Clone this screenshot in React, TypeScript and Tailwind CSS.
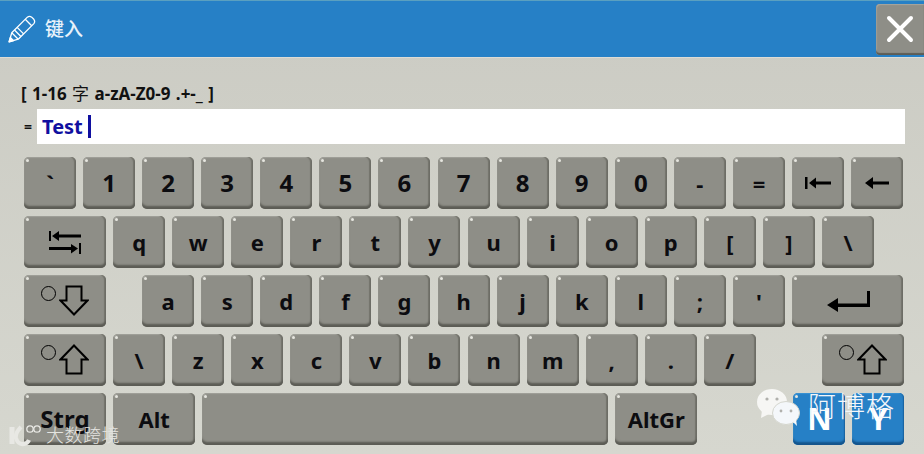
import React from "react";

const fontStack = "font-['Noto_Sans','Noto_Sans_CJK_SC',sans-serif]";

function Key({ w = "w-[52px]", blue = false, className = "", children }: { w?: string; blue?: boolean; className?: string; children?: React.ReactNode }) {
  return (
    <div
      className={`relative flex h-[52px] shrink-0 items-center justify-center rounded-[5px] font-bold leading-none ${
        blue
          ? "bg-[#2680c6] text-white shadow-[inset_0_-3px_2px_#14548c,inset_-1px_0_1px_#1c6aa8,inset_1px_1px_1px_#3f97d8]"
          : "bg-[#8e8e87] text-[#0c0c10] shadow-[inset_0_-3px_2px_#5c5c55,inset_-2px_0_1px_#74746d,inset_1px_1px_1px_#a6a69f]"
      } ${w} ${className || "text-[22px]"}`}
    >
      <span className="absolute left-[2px] top-[2px] h-[3px] w-[3px] rounded-full bg-[#e6e6e0]" />
      {children}
    </div>
  );
}

const Row = ({ children }: { children: React.ReactNode }) => <div className="flex gap-[7.08px]">{children}</div>;

const ShiftArrow = ({ down = false }: { down?: boolean }) => (
  <svg width="30" height="31" viewBox="0 0 30 31" className={down ? "rotate-180" : ""} fill="none" stroke="#000" strokeWidth="2">
    <path d="M15 1.5 L28.5 15.5 H22.5 V29.5 H7.5 V15.5 H1.5 Z" />
  </svg>
);

const ShiftKey = ({ down = false }: { down?: boolean }) => (
  <Key w="w-[82px]">
    <div className="flex items-start gap-[3px] pb-[2px]">
      <span className="mt-[1px] block h-[15px] w-[15px] shrink-0 rounded-full border border-black" />
      <ShiftArrow down={down} />
    </div>
  </Key>
);

const Chars = ({ chars, className = "" }: { chars: string[]; className?: string }) => (
  <>
    {chars.map((c, i) => (
      <Key key={i} className={className}>
        {c}
      </Key>
    ))}
  </>
);

export default function App() {
  return (
    <div className={`relative h-[454px] w-[924px] overflow-hidden bg-gradient-to-b from-[#cbcbc3] to-[#d6d7cf] ${fontStack}`}>
      <div className="flex h-[58px] items-center justify-between border-t border-b border-t-[#5aa0c0] border-b-[#dcdcd6] bg-[#2680c6] pl-[8px]">
        <div className="flex items-center">
          <svg width="28" height="28" viewBox="0 0 26 26" fill="none" stroke="#fff" strokeWidth="1.2" strokeLinejoin="round">
            <path d="M1 25 L3.5 16.5 L18 2 Q20 0.5 22 2 L24 4 Q25.5 6 24 8 L9.5 22.5 Z" />
            <path d="M3.5 16.5 L9.5 22.5 M6 14 L12 20 M8.5 11.5 L14.5 17.5 M16 4 L22 10" />
            <path d="M1 25 L2.2 20.8 L5.2 23.8 Z" fill="#fff" />
          </svg>
          <span className="ml-[9px] text-[19px] font-medium leading-none text-[#e8f2fa]">键入</span>
        </div>
        <div className="flex h-[51px] w-[48px] items-center justify-center rounded-l-[4px] bg-[#8e8e87] shadow-[inset_0_-2px_1px_#5c5c55,inset_1px_1px_1px_#a6a69f]">
          <svg width="28" height="28" viewBox="0 0 28 28" stroke="#fff" strokeWidth="4" strokeLinecap="round">
            <path d="M3 3 L25 25 M25 3 L3 25" />
          </svg>
        </div>
      </div>

      <div className="pl-[21px] pt-[27px] text-[17px] font-bold leading-[18px] text-[#111] [word-spacing:1px]">
        [ 1-16 <span className="font-normal">字</span> a-zA-Z0-9 .+-_ ]
      </div>

      <div className="mt-[6px] flex items-center pl-[24px]">
        <span className="w-[13px] text-[14px] font-bold text-[#111]">=</span>
        <div className="flex h-[35px] w-[868px] items-center bg-white pl-[5px] text-[20px] font-bold text-[#1010a0]">
          Test <span className="ml-[5px] h-[23px] w-[3px] bg-[#1010a0]" />
        </div>
      </div>

      <div className="flex flex-col gap-[7px] pl-[24px] pt-[13px]">
        <Row>
          <Chars chars={["`"]} />
          <Chars chars={["1", "2", "3", "4", "5", "6", "7", "8", "9", "0"]} className="text-[24px]" />
          <Chars chars={["-", "="]} />
          <Key>
            <svg width="26" height="14" viewBox="0 0 26 14" fill="#000">
              <rect x="0" y="1" width="2.5" height="12" />
              <path d="M4 7 L11 1.5 V5.5 H26 V8.5 H11 V12.5 Z" />
            </svg>
          </Key>
          <Key>
            <svg width="24" height="14" viewBox="0 0 24 14" fill="#000">
              <path d="M0 7 L8 1 V5.5 H24 V8.5 H8 V13 Z" />
            </svg>
          </Key>
        </Row>
        <Row>
          <Key w="w-[82px]">
            <svg width="34" height="26" viewBox="0 0 34 26" fill="#000">
              <rect x="1" y="2" width="2" height="10" />
              <path d="M4 7 L11 2 V5.5 H33 V8.5 H11 V12 Z" />
              <rect x="31" y="14" width="2" height="11" />
              <path d="M30 19.5 L23 15 V18 H1 V21 H23 V24.5 Z" />
            </svg>
          </Key>
          <Chars chars={["q", "w", "e", "r", "t", "y", "u", "i", "o", "p", "[", "]", "\\"]} />
        </Row>
        <Row>
          <ShiftKey down />
          <div className="w-[22px] shrink-0" />
          <Chars chars={["a", "s", "d", "f", "g", "h", "j", "k", "l", ";", "'"]} />
          <Key w="w-[111px]">
            <svg width="44" height="24" viewBox="0 0 44 24" fill="#000" className="ml-[3px]">
              <path d="M0 16 L11 9 V14.5 H40 V2 H43 V18 H11 V23 Z" />
            </svg>
          </Key>
        </Row>
        <Row>
          <ShiftKey />
          <Chars chars={["\\", "z", "x", "c", "v", "b", "n", "m", ",", ".", "/"]} />
          <div className="w-[52px] shrink-0" />
          <ShiftKey />
        </Row>
        <Row>
          <Key w="w-[82px]" className="text-[24px]">Strg</Key>
          <Key w="w-[82px]" className="text-[22px]">Alt</Key>
          <Key w="w-[406px]" />
          <Key w="w-[82px]" className="text-[22px]">AltGr</Key>
          <div className="w-[82px] shrink-0" />
          <Key blue className="text-[30px]">N</Key>
          <Key blue className="text-[30px]">Y</Key>
        </Row>
      </div>

      {/* Watermarks lying over the keys */}
      <div className="absolute left-[9px] top-[423px] flex items-center text-[#e4e4e0]">
        <svg width="34" height="24" viewBox="0 0 34 24" fill="none" stroke="#e8e8e4" strokeWidth="2">
          <path d="M3 4 V21" strokeWidth="5" />
          <path d="M12 4 Q6 10 7 15 Q9 22 15 21 Q19 20 20 17" strokeWidth="4" />
          <circle cx="21" cy="6" r="3.2" strokeWidth="1.3" />
          <circle cx="28" cy="6" r="3.2" strokeWidth="1.3" />
        </svg>
        <span className="ml-[3px] text-[18px] font-light leading-none tracking-[0.5px]">大数跨境</span>
      </div>
      <div className="absolute left-[757px] top-[389px]">
        <svg width="43" height="37" viewBox="0 0 43 37" fill="#f6f6f4">
          <ellipse cx="15" cy="13" rx="15" ry="13" />
          <path d="M5 21 L4 29 L14 24 Z" />
          <ellipse cx="29" cy="24" rx="13.5" ry="11.5" fill="#f4f7fa" stroke="#d5d6ce" strokeWidth="1" />
          <path d="M36 33 L40 37 L39 30 Z" fill="#f4f7fa" />
          <circle cx="10" cy="10" r="1.6" fill="#b0b0ac" />
          <circle cx="20" cy="10" r="1.6" fill="#b0b0ac" />
          <circle cx="24" cy="22" r="1.4" fill="#b0b0ac" />
          <circle cx="34" cy="22" r="1.4" fill="#b0b0ac" />
        </svg>
      </div>
      <div className="absolute left-[808px] top-[388px] text-[28px] font-light leading-[36px] tracking-[1px] text-[#f2f6fa]">阿博格</div>
    </div>
  );
}
